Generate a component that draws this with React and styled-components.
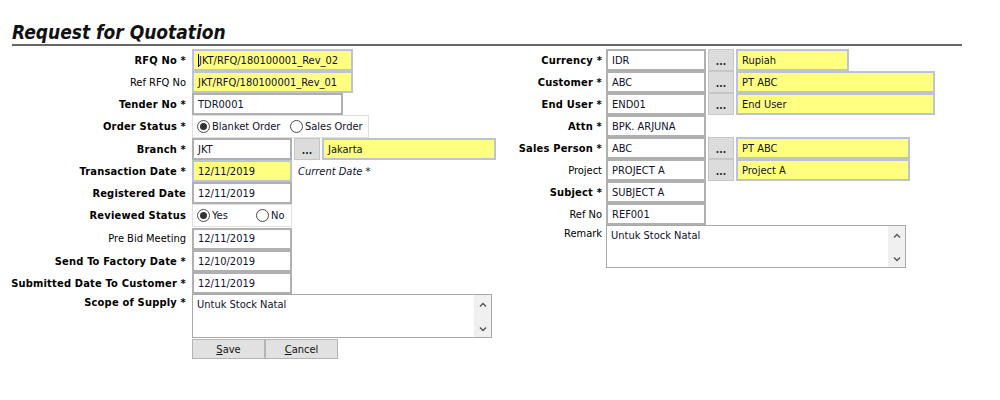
import { styled, createGlobalStyle } from "styled-components";

const GlobalStyle = createGlobalStyle`
	body {
		margin: 0;
		background: #fff;
		font-family: "DejaVu Sans", "DejaVu Sans Condensed", Verdana, sans-serif;
		font-stretch: semi-condensed;
		font-size: 11px;
		color: #000;
	}
`;

const Page = styled.div`
	padding-top: 21px;
`;

const Header = styled.div`
	margin-left: 12px;
	width: 950px;
	border-bottom: 2px solid #666;
`;

const Title = styled.h1`
	margin: 0;
	font-size: 19px;
	line-height: 23px;
	font-weight: 700;
	font-style: italic;
	color: #111;
`;

const Form = styled.div`
	display: flex;
	margin-top: 3px;
`;

const Panel = styled.div`
	display: flex;
	flex-direction: column;
	width: ${(p) => p.$w}px;
`;

const Row = styled.div`
	display: flex;
	align-items: ${(p) => (p.$top ? "flex-start" : "center")};
	height: ${(p) => p.$h || 22}px;
	gap: ${(p) => p.$gap}px;
`;

const Label = styled.div`
	width: ${(p) => p.$w}px;
	flex-shrink: 0;
	text-align: right;
	white-space: nowrap;
	font-weight: ${(p) => (p.$bold ? 700 : 400)};
	letter-spacing: ${(p) => (p.$bold ? "0.2px" : "normal")};
	padding-top: ${(p) => (p.$top ? 2 : 0)}px;
`;

const Controls = styled.div`
	display: flex;
	align-items: center;
	gap: 2px;
`;

const Field = styled.div`
	box-sizing: border-box;
	width: ${(p) => p.$w}px;
	height: 22px;
	display: flex;
	align-items: center;
	padding: 0 4px;
	white-space: nowrap;
	overflow: hidden;
	color: #10102a;
	background: ${(p) => (p.$yellow ? "#ffff80" : "#fff")};
	border: 2px solid ${(p) => (p.$yellow ? "#bcc3d6" : "#b0b0b0")};
`;

const Caret = styled.span`
	display: inline-block;
	width: 1px;
	height: 13px;
	background: #000060;
`;

const LookupButton = styled.div`
	box-sizing: border-box;
	width: 26px;
	height: 22px;
	background: #dcdcdc;
	border: 1px solid #c6c6c6;
	display: flex;
	align-items: center;
	justify-content: center;
	font-weight: 700;
	font-size: 10px;
	color: #222;
	padding-top: 3px;
`;

const Note = styled.span`
	margin-left: 4px;
	font-style: italic;
	color: #10102a;
`;

const RadioBox = styled.div`
	box-sizing: border-box;
	width: ${(p) => p.$w}px;
	height: 23px;
	display: flex;
	align-items: center;
	padding-left: 4px;
	border: 1px solid #e0e0e0;
`;

const RadioItem = styled.label`
	display: flex;
	align-items: center;
	gap: 2px;
	width: ${(p) => p.$w}px;
	color: #10102a;
`;

const RadioCircle = styled.span`
	box-sizing: border-box;
	width: 13px;
	height: 13px;
	border-radius: 50%;
	border: 1px solid #4a4a4a;
	background: #fff;
	display: flex;
	align-items: center;
	justify-content: center;

	&::after {
		content: "";
		width: 7px;
		height: 7px;
		border-radius: 50%;
		background: ${(p) => (p.$on ? "#333" : "transparent")};
	}
`;

const TextBox = styled.div`
	box-sizing: border-box;
	width: 300px;
	height: ${(p) => p.$h}px;
	display: flex;
	border: 1px solid #a8a8a8;
	background: #fff;
`;

const TextBody = styled.div`
	flex: 1;
	padding: 3px 4px;
	color: #10102a;
`;

const ScrollBar = styled.div`
	width: 17px;
	background: #f0f0f0;
	display: flex;
	flex-direction: column;
	justify-content: space-between;
	align-items: center;
	padding: 7px 0 5px;
`;

const Buttons = styled.div`
	display: flex;
	height: 20px;
	margin-top: 1px;
	margin-left: 192px;
`;

const Button = styled.div`
	box-sizing: border-box;
	width: 73px;
	height: 20px;
	background: #e1e1e1;
	border: 1px solid #b4b4b4;
	display: flex;
	align-items: center;
	justify-content: center;
	color: #111;

	u {
		text-decoration: underline;
	}
`;

const Chevron = ({ up }) => (
	<svg width="8" height="5" viewBox="0 0 8 5">
		<path
			d={up ? "M1 4.5 L4 1.5 L7 4.5" : "M1 0.5 L4 3.5 L7 0.5"}
			fill="none"
			stroke="#555"
			strokeWidth="1.4"
		/>
	</svg>
);

const Memo = ({ h, text }) => (
	<TextBox $h={h}>
		<TextBody>{text}</TextBody>
		<ScrollBar>
			<Chevron up />
			<Chevron />
		</ScrollBar>
	</TextBox>
);

const Lookup = ({ code, name, nameW }) => (
	<Controls>
		<Field $w={100}>{code}</Field>
		<LookupButton>...</LookupButton>
		<Field $yellow $w={nameW}>
			{name}
		</Field>
	</Controls>
);

const L = (props) => <Label $w={186} {...props} />;
const R = (props) => <Label $w={102} {...props} />;

const App = () => {
	return (
		<Page>
			<GlobalStyle />
			<Header>
				<Title>Request for Quotation</Title>
			</Header>
			<Form>
				<Panel $w={500}>
					<Row $gap={6}>
						<L $bold>RFQ No *</L>
						<Field $yellow $w={161}>
							<Caret />
							JKT/RFQ/180100001_Rev_02
						</Field>
					</Row>
					<Row $gap={6}>
						<L>Ref RFQ No</L>
						<Field $yellow $w={161}>
							JKT/RFQ/180100001_Rev_01
						</Field>
					</Row>
					<Row $gap={6}>
						<L $bold>Tender No *</L>
						<Field $w={151}>TDR0001</Field>
					</Row>
					<Row $gap={6} $h={23}>
						<L $bold>Order Status *</L>
						<RadioBox $w={177}>
							<RadioItem $w={93}>
								<RadioCircle $on />
								Blanket Order
							</RadioItem>
							<RadioItem>
								<RadioCircle />
								Sales Order
							</RadioItem>
						</RadioBox>
					</Row>
					<Row $gap={6}>
						<L $bold>Branch *</L>
						<Lookup code="JKT" name="Jakarta" nameW={174} />
					</Row>
					<Row $gap={6}>
						<L $bold>Transaction Date *</L>
						<Controls>
							<Field $yellow $w={100}>
								12/11/2019
							</Field>
							<Note>Current Date *</Note>
						</Controls>
					</Row>
					<Row $gap={6}>
						<L $bold>Registered Date</L>
						<Field $w={100}>12/11/2019</Field>
					</Row>
					<Row $gap={6} $h={23}>
						<L $bold>Reviewed Status</L>
						<RadioBox $w={100}>
							<RadioItem $w={59}>
								<RadioCircle $on />
								Yes
							</RadioItem>
							<RadioItem>
								<RadioCircle />
								No
							</RadioItem>
						</RadioBox>
					</Row>
					<Row $gap={6} $h={23}>
						<L>Pre Bid Meeting</L>
						<Field $w={100}>12/11/2019</Field>
					</Row>
					<Row $gap={6}>
						<L $bold>Send To Factory Date *</L>
						<Field $w={100}>12/10/2019</Field>
					</Row>
					<Row $gap={6}>
						<L $bold>Submitted Date To Customer *</L>
						<Field $w={100}>12/11/2019</Field>
					</Row>
					<Row $gap={6} $h={44} $top>
						<L $bold $top>
							Scope of Supply *
						</L>
						<Memo h={44} text="Untuk Stock Natal" />
					</Row>
					<Buttons>
						<Button>
							<span>
								<u>S</u>ave
							</span>
						</Button>
						<Button>
							<span>
								<u>C</u>ancel
							</span>
						</Button>
					</Buttons>
				</Panel>
				<Panel $w={480}>
					<Row $gap={4}>
						<R $bold>Currency *</R>
						<Lookup code="IDR" name="Rupiah" nameW={113} />
					</Row>
					<Row $gap={4}>
						<R $bold>Customer *</R>
						<Lookup code="ABC" name="PT ABC" nameW={199} />
					</Row>
					<Row $gap={4}>
						<R $bold>End User *</R>
						<Lookup code="END01" name="End User" nameW={199} />
					</Row>
					<Row $gap={4}>
						<R $bold>Attn *</R>
						<Field $w={100}>BPK. ARJUNA</Field>
					</Row>
					<Row $gap={4}>
						<R $bold>Sales Person *</R>
						<Lookup code="ABC" name="PT ABC" nameW={174} />
					</Row>
					<Row $gap={4}>
						<R>Project</R>
						<Lookup code="PROJECT A" name="Project A" nameW={174} />
					</Row>
					<Row $gap={4}>
						<R $bold>Subject *</R>
						<Field $w={100}>SUBJECT A</Field>
					</Row>
					<Row $gap={4}>
						<R>Ref No</R>
						<Field $w={100}>REF001</Field>
					</Row>
					<Row $gap={4} $h={43} $top>
						<R $top>Remark</R>
						<Memo h={43} text="Untuk Stock Natal" />
					</Row>
				</Panel>
			</Form>
		</Page>
	);
};

export default App;
